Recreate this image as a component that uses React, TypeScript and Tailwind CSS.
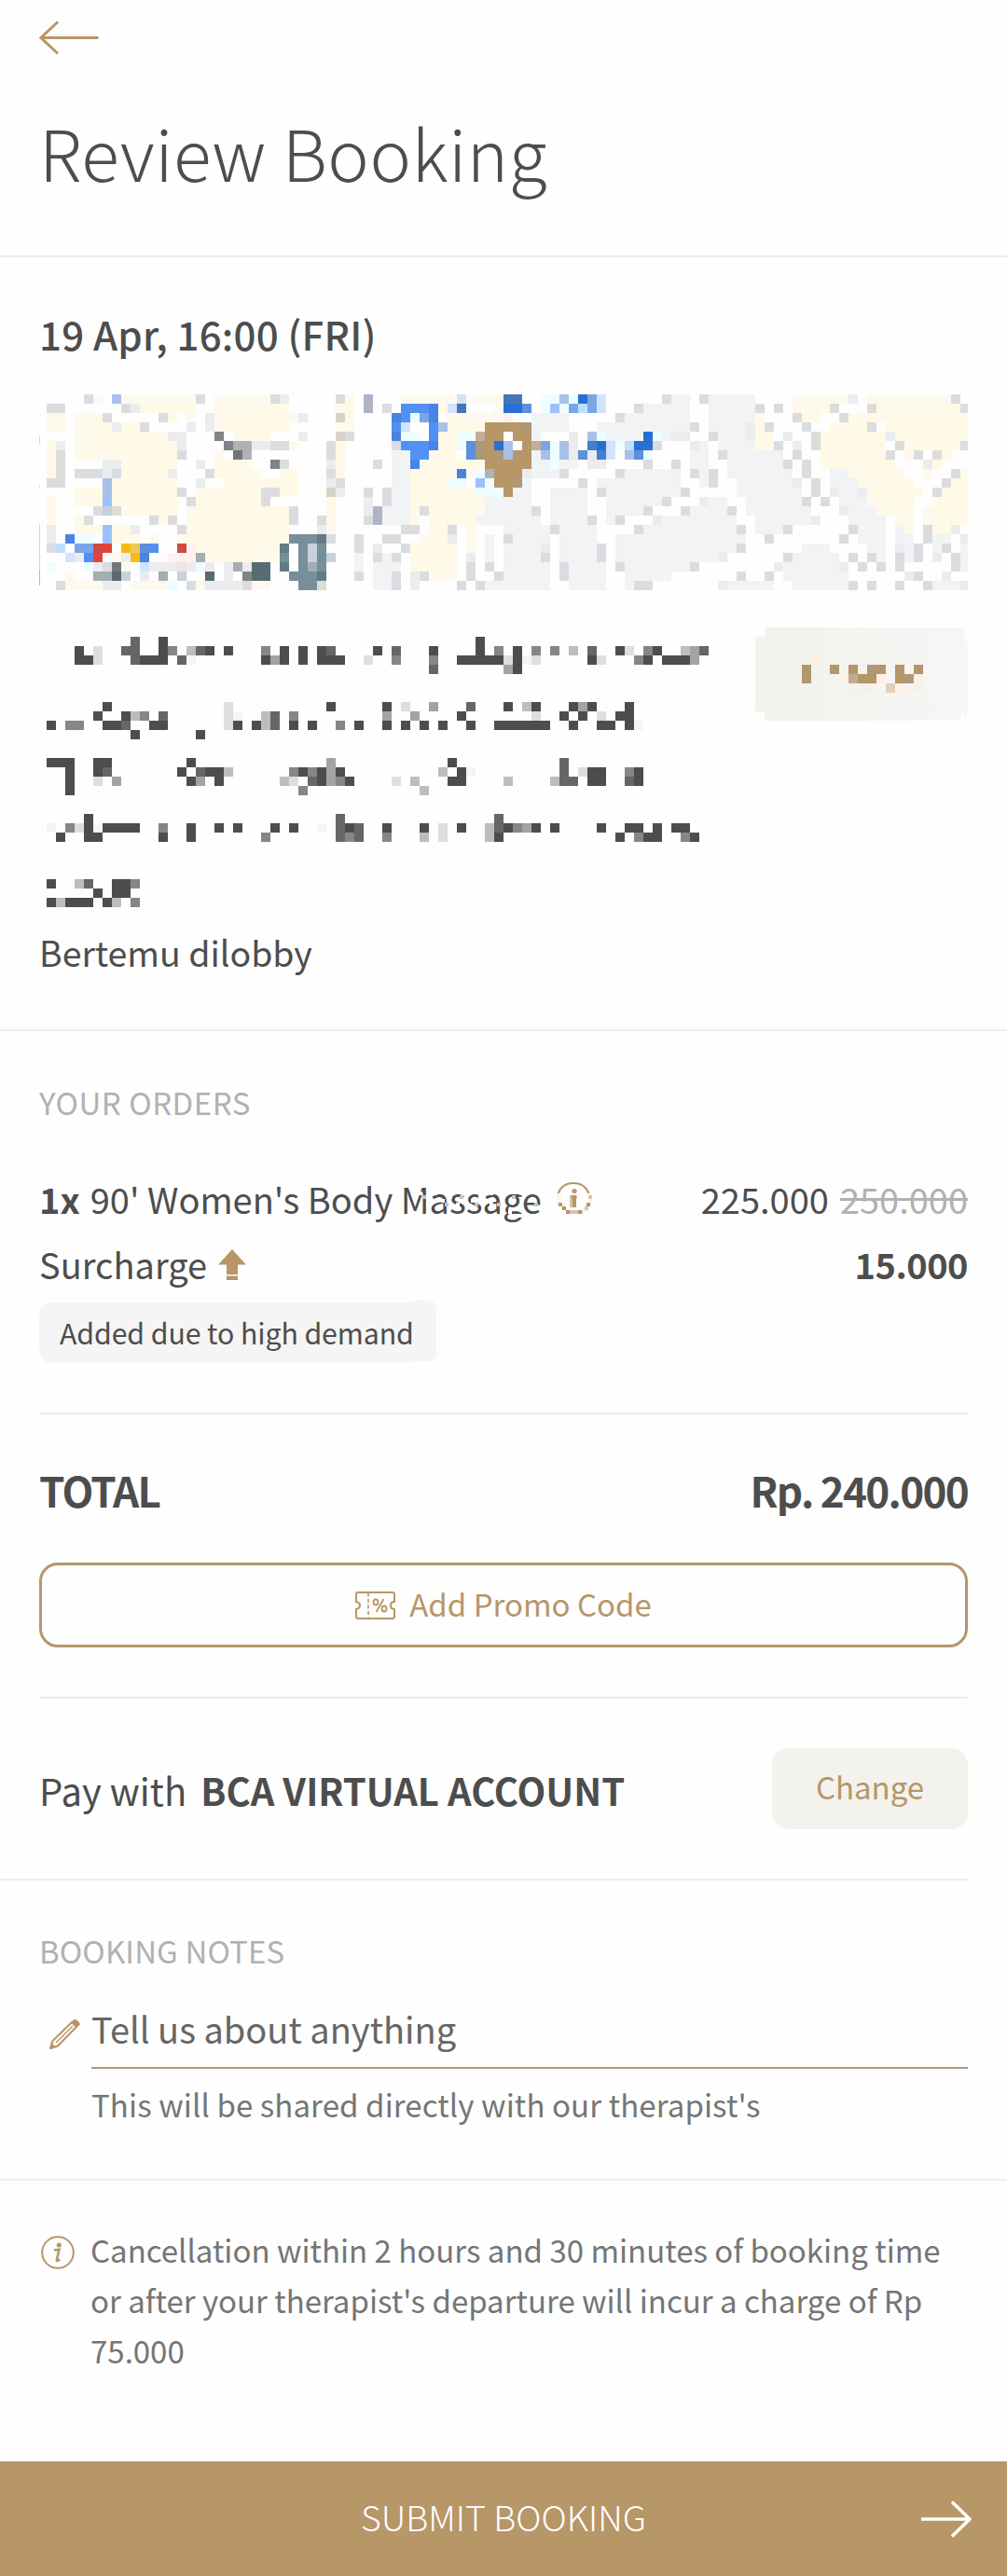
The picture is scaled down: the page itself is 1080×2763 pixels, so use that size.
import React from "react";

type Palette = Record<string, string>;

const MAP_PALETTE: Palette = {
  y: "#fff9e7",
  Y: "#fdf9ee",
  g: "#dbdce0",
  w: "#dcddd9",
  W: "#d6d4c9",
  h: "#ebecee",
  b: "#f1f3f5",
  k: "#818486",
  K: "#737679",
  m: "#afb2b5",
  t: "#768f9a",
  T: "#637b86",
  s: "#c6d2db",
  D: "#586b73",
  d: "#a3adb2",
  "1": "#4a84e2",
  "2": "#5191f6",
  "3": "#a9c0e9",
  "4": "#9cc0fb",
  "5": "#d3e3fb",
  "6": "#eefdff",
  c: "#bde0ff",
  r: "#e34439",
  R: "#cf4b42",
  o: "#f5bb14",
  O: "#eec75c",
  p: "#f4e2e2",
  P: "#fff2ee",
  n: "#b79668",
  N: "#ae9878",
  u: "#c3ad94",
  B: "#2770d3",
  C: "#4576b8",
  E: "#4080cf",
  e: "#5b90da",
  f: "#7ba6e6",
  v: "#b0b3c8",
};

// west / centre / east parts of the map preview, one char per 10px block
const MAP_TILES: string[][] = [
  [
    ".....gY.3YYYYYYYYg.YYYYYYwh.....wY",
    ".wg......ghyyyyyy..yyyyyyyy.....Yy",
    ".yy.Yyyg.....gy.Y.hyyyyyyyyYh...Wy",
    ".yY.Yyyyhyyg....h.hYyyyyyyy.....YY",
    "....YyyyyyyyyYhh...k.Yyyy...h...Wg",
    ".yh.Yyyyyyyyyyyh....kmmhhgwy...gy.",
    ".yw.YyyYyyyyyyyg...Y.Km........wy.",
    ".yw....hhyyyyyy..h.yyyy..kg....hy.",
    ".yw.ggghgyyyyyh...gyyyyy..yy...wy.",
    ".gg....3yyyyyyy..h..yyyyyyyy...hg.",
    "....yyy3yyyyyyyg.yyYyyyyggyy...Wh.",
    ".y..yyy4yyyyyyy.gyyyyyyyg......y..",
    ".y....gswYyyyyy.Yyyyyyyyyyyg...y..",
    ".y..yg......gyw.yyyyyyyyyyyg..wy..",
    ".h..Yyy4yyh....gyyyyyyyyyyy...hY..",
    ".h.166.4yyy.Y..YyyyyyyyyyyytttTg..",
    ".gc.ffRr.oOe2..RPyyyyyyyyyT.tst...",
    "...5h2r.Yho1..PPPdyyyyyyYyt.tsts..",
    ".6...6hgKY.5hhhph6h.hdhDD.T.tdt...",
    "...Y..ddDs.h.d.s..D.h.kDD..tttT...",
    "..gYYYYhh.YYYY6.gYhhhhgYY...ttw...",
  ],
  [
    ".v...YYYYYY5YYYYCC..6636Bf5......g",
    ".v.g.2221y5C...YBBe.646fcf5...gbbb",
    "....126f1.YyYYYYP..bbbb.....gbbbbb",
    "....25..23yyyynnnnNbbbb...bbbbbbbb",
    "....166.2yy66unn.nnb...h.36bbbbB6b",
    "....g2221yy6eNnB3.nuf63h.EB56cBBg.",
    "....bb22yyy.eNnN3nnb363hehE5.3e6..",
    "..g.bb1Yyyyyyynnnnnbb6bb.hh....g..",
    "....bbyyyyy1Y6mnnnhbbbg.....gbbbbb",
    "....bbyyyy66.46nnNb.....g.bbbbbbbb",
    ".g.gbbyyyyyyy666nbb..bbbb.gbbbbbbb",
    ".h.gbbyyyyyyyybbbbb..bbbb..bbbbbbg",
    ".hvbbbygyyyyyYbbbbbg.bbbb..bbbbg..",
    ".gvbbby.yyyyybbbbbbb.bbbbg.bg...hb",
    ".....gg.yyg.y...bbbbbgbbbb....gbbb",
    "g..gg..Yyyh.y.b.gbbbb.bbbb..bbbbbb",
    "w.h..gyyyyy.Y.b.bbbbh.bbbbg.bbbbbb",
    "b.gbg.yyyyy.h.b.bbbbg.bbbbg.bbbbbb",
    "b.bbb.yyyyy.g.g.bbbbb.gbbbb.gbbbbb",
    "g.bbg.hgYyY.g..gbbbbb.gbbbb..bbbbb",
    "..bbg.h....g.gbbbbbbb..bbbb..bgg..",
  ],
  [
    "bb.gbbbbb....YYYYYYh.YYYYYYYYYg.",
    "bb..bbbbbw.w.yyyyw...wyyyyyyyyyg",
    "bb..bbbbby...wyy..wyYyYyyyyyyyyy",
    "bbg.bbbbhyg...g..yyyyg.yyyyyyyyy",
    "hh..gbbbhyy.h..wyyyyyyyhyyyyyyyy",
    "..hb.bbbbyyg.h.wyyyyyyy.wyyyyyyg",
    "..bb.gbbbbbb.g..yyyyyyyg.yg.wy..",
    "g.bb..bbbbbbg.g.yyyyyyyy...hy...",
    "b.gbg.bbbbbbb.g..bbyyyyyy..y..wy",
    "b..bg..bbbbbbh.g.bbbyyyyyy...gyy",
    "bg.....bbbbbbb.g.hbbhyyyyyy.gyyy",
    "...hbb..bbbbbbg.g.bbbYyyyy..yyyy",
    ".gbbbbg.bbbbbbb...hbbbYyyy.Yyyyy",
    "bbbbbbb..bbbbbbh...bbbb.yy.Yyyyy",
    "bbbbbbbg.bbbg......gbbb.by.wyyh.",
    "bbbbbbbb..g.......g.bbb.bb.gbb.h",
    "bbbbbbbg......bbb....bb.hbg.bg.b",
    "bbbbbh......gbbbbb.g.gb.gbg.h.gb",
    "bbg........hbbbbbbh.g.g.g.....gb",
    ".......g..g.bbbbbbb......hg..h..",
    ".....hbbbbb..bbbbbbg.g..g..gbbbh",
  ],
];

const MAP_ROWS = MAP_TILES[0].map((row, i) => row + MAP_TILES[1][i] + MAP_TILES[2][i]);

const INK: Palette = {
  X: "#4d4d4d",
  a: "#666666",
  A: "#868686",
  m: "#a3a3a3",
  c: "#bdbdbd",
  l: "#dedede",
  f: "#f5f5f5",
};

// masked address: row number -> "column + run of shades"
const ADDRESS_ROWS: [number, string][] = [
  [0, "11a 14X 48X"],
  [1, "5X 7l 10aa 14XA 17caX 21X 25A 27X 29X 31Xa 37X 39a 43X 48X 50A 52X 54A 56A 58c 60a 63Xl 66AX 70cma"],
  [2, "5XXl 11aXXX 16af 25XmX 29X 31XXX 36l 39A 43A 46XXXXXlXfl 60Xl 65AX 68XXXm"],
  [3, "43a 51mX"],
  [7, "8X 21l 32X 38X 40l 43m 47a 51X 53cX 58XmX 64X"],
  [8, "7X 10XcA 14a 21lf 25ca 28A 38m 41m 46X 54l 57X 59X 61l 63XX"],
  [9, "2X 4AA 8XXa 13XX 21lX 24Xca 28X 30X 33A 35X 38X 40X 42X 44X 47X 50XXXXXX 58X 61XX 64Xf"],
  [10, "11X 18X"],
  [13, "2XXX 7XX 17X 32m 45X 57a"],
  [14, "4X 7Xa 16X 18aXXc 28AXAXmX 44c 46Xf 57a 59lXX 64AX"],
  [15, "4X 7l 9m 17Xm 20X 27cl 30aXmAX 39l 41c 45XX 51c 56caa 60XX 64aX"],
  [16, "4X 29A 42c"],
  [19, "6X 33a 50a"],
  [20, "2f 4AlXfXXXX 14A 17X 20X 22X 26X 28X 31f 33aXa 38X 42X 44l 46X 49caXAmX 56X 61X 64XX 67X 69XX"],
  [21, "3X 6XX 14X 17X 25A 33aAa 38A 42c 44l 49cX 63X 65AXX 70AX"],
  [26, "2X 5ca 9XXA"],
  [27, "7X 9XX"],
  [28, "2XcXXX 8Xc 11A"],
];

const GOLD: Palette = {
  n: "#b3966c",
  N: "#af987a",
  u: "#c0ac95",
  U: "#e2d1ba",
  P: "#fdf1e3",
  Q: "#ffeedc",
  f: "#f7f1eb",
};

const BUTTON_ROWS: [number, string][] = [
  [3, "9Q"],
  [4, "8n 11n 13nfNn 18n 20n"],
  [5, "8n 12PunnP 18nNP"],
  [6, "9f 13fff 17UP 20f"],
];

const Blocks = ({ rows, palette }: { rows: [number, string][]; palette: Palette }) => (
  <>
    {rows.map(([row, runs]) =>
      runs.split(" ").map((run) => {
        const start = parseInt(run, 10);
        const shades = run.replace(/\d+/, "");
        return [...shades].map((s, i) => (
          <rect
            key={`${row}-${start + i}`}
            x={(start + i) * 10}
            y={row * 10}
            width={10}
            height={10}
            fill={palette[s]}
          />
        ));
      })
    )}
  </>
);

const MapPreview = () => (
  <svg className="block h-[210px] w-[996px]" viewBox="2 0 996 210" shapeRendering="crispEdges">
    <path d="M2 44h1v10h-1zM2 97h1v3h-1zM2 139h1v47h-1z" fill="#d5d6da" />
    <path d="M2 187h1v18h-1z" fill="#b0bdc1" />
    {MAP_ROWS.map((row, y) =>
      [...row].map((cell, x) =>
        cell === "." ? null : (
          <rect key={`${x}-${y}`} x={x * 10} y={y * 10} width={10} height={10} fill={MAP_PALETTE[cell]} />
        )
      )
    )}
  </svg>
);

const MaskedAddress = () => (
  <svg className="block h-[290px] w-[720px]" viewBox="12 0 720 290" shapeRendering="crispEdges">
    <Blocks rows={ADDRESS_ROWS} palette={INK} />
  </svg>
);

const MaskedButton = () => (
  <svg className="block h-[100px] w-[228px]" viewBox="30 0 228 100">
    <defs>
      <linearGradient id="fade" x1="0" x2="1">
        <stop offset="0" stopColor="#f2f1eb" />
        <stop offset="0.5" stopColor="#f4f4f1" />
        <stop offset="1" stopColor="#f7f6f6" />
      </linearGradient>
    </defs>
    <path d="M30 10h10V0h214v11q4 4 4 10v66q0 6-4 10v-7h-4v10H40V90H30z" fill="url(#fade)" />
    <g shapeRendering="crispEdges">
      <Blocks rows={BUTTON_ROWS} palette={GOLD} />
    </g>
  </svg>
);

const InfoIcon = () => (
  <svg className="h-9 w-9" viewBox="0 0 36 36" fill="none">
    <circle cx="18" cy="18" r="16.8" stroke="#b79668" strokeWidth="2" />
    <circle cx="19.3" cy="10" r="2.6" fill="#b79668" />
    <path d="M14 15.5l5.5-.8-2.6 11q-.3 1.6 1 1.2l2.4-1.4" stroke="#b79668" strokeWidth="2.6" />
  </svg>
);

// same info badge, lower half broken into blocks
const MaskedInfoIcon = () => (
  <svg className="h-9 w-10" viewBox="0 0 40 36" fill="none">
    <path d="M1.500 12Q6 1 18 1t16.500 11" stroke="#b79668" strokeWidth="2" />
    <circle cx="19" cy="9.500" r="2.600" fill="#b79668" />
    <g shapeRendering="crispEdges">
      <path d="M0 12h5v10h4v6h4v4H9v-2H5v-4H0zM34 12h4v12h-4v8h-6v-4h3v-6h3z" fill="#fdf5e8" />
      <path d="M14 14h8v4h-8z" fill="#d8c5a8" />
      <path d="M16 14h5v13h-5z" fill="#b79668" />
      <path d="M14 18h3v9h-3zM10 30h18v4H10zM34 14h4v4h-4zM30 26h4v4h-4z" fill="#d8c5a8" />
      <path d="M2 22h4v4H2zM6 26h4v4H6zM10 30h4v4h-4zM23 30h4v4h-4zM32 22h4v4h-4z" fill="#b3966c" />
    </g>
  </svg>
);

const TicketIcon = () => (
  <svg className="h-[30px] w-[43px]" viewBox="0 0 43 30" fill="none" stroke="#b79668" strokeWidth="2">
    <path d="M3 1h37q2 0 2 2v8q-4 0-4 4t4 4v8q0 2-2 2H3q-2 0-2-2v-8q4-1 4-4t-4-4V3q0-2 2-2z" />
    <path d="M14 1.500v27" strokeDasharray="4 2.500" strokeWidth="1.600" />
    <ellipse cx="22" cy="11.500" rx="2.500" ry="3" strokeWidth="1.800" />
    <ellipse cx="31" cy="18.500" rx="2.500" ry="3" strokeWidth="1.800" />
    <path d="M30.500 8l-8 14" strokeWidth="1.800" />
  </svg>
);

const PencilIcon = () => (
  <svg className="h-[34px] w-[34px]" viewBox="0 0 34 34" fill="none" stroke="#b79668" strokeWidth="2">
    <path d="M2 32l2.500-8L25 4l5 5L10 29.500z" strokeLinejoin="round" />
    <path d="M8 26L26 8" strokeWidth="1.400" />
    <path d="M25 4l2-2.500q2-1 4.500 1.500t1.500 4l-3 2z" fill="#b79668" strokeWidth="1" />
    <path d="M1 33l2-7 5 5z" fill="#b79668" stroke="none" />
  </svg>
);

export default function App() {
  return (
    <div className="min-h-[2763px] w-[1080px] bg-[#fefefe] font-['Noto_Sans_CJK_SC','Noto_Sans',sans-serif] text-[#4d4d4d]">
      <header className="h-[276px] border-b-2 border-[#ececec] px-[42px] pt-[22px]">
        <svg className="block h-[37px] w-[64px]" viewBox="0 0 64 37" fill="none" stroke="#b79668" strokeWidth="3">
          <path d="M63.500 18.500H2M20 1.500L2 18.500l18 17" />
        </svg>
        <h1 className="mt-14 text-[75px] font-light leading-[96px] tracking-[0.5px]">Review Booking</h1>
      </header>

      <section className="h-[830px] border-b-2 border-[#ececec] px-[42px] pt-[52px]">
        <p className="text-[42px] font-medium leading-[60px] tracking-[0.2px]">19 Apr, 16:00 (FRI)</p>
        <div className="mt-[35px]">
          <MapPreview />
        </div>
        <div className="mt-10 flex items-start justify-between">
          <div className="pt-2.5">
            <MaskedAddress />
          </div>
          <MaskedButton />
        </div>
        <p className="mt-[18px] text-[37.5px] leading-[60px]">Bertemu dilobby</p>
      </section>

      <section className="px-[42px] pt-[52px]">
        <h2 className="text-[33px] leading-[48px] tracking-[0.5px] text-[#b1b1b1]">YOUR ORDERS</h2>
        <div className="mt-[50px] flex h-[60px] items-center text-[38px] leading-[60px]">
          <span className="font-bold">1x</span>
          <span className="relative ml-[11px]">
            90' Women's Body Massage
            <svg
              className="absolute right-0 bottom-[6px] h-8 w-[136px]"
              viewBox="0 0 136 32"
              shapeRendering="crispEdges"
            >
              <path
                d="M4 0h4v4H4zM16 0h8v4h-8zM36 4h4v4h-4zM28 8h4v4h-4zM44 12h4v4h-4zM52 0h4v4h-4zM60 8h4v4h-4zM68 4h4v4h-4zM76 0h8v4h-8zM80 12h4v4h-4zM92 8h4v4h-4zM100 20h4v4h-4zM112 0h4v4h-4zM124 8h4v4h-4zM108 24h8v4h-8z"
                fill="#fefefe"
              />
              <path
                d="M8 4h4v4H8zM32 12h4v4h-4zM48 4h4v4h-4zM64 12h4v4h-4zM88 12h4v4h-4zM104 4h4v4h-4zM128 12h4v4h-4z"
                fill="#c4c4c4"
              />
            </svg>
          </span>
          <div className="ml-4">
            <MaskedInfoIcon />
          </div>
          <span className="ml-auto">225.000</span>
          <span className="ml-3 text-[#b1b1b1] line-through">250.000</span>
        </div>
        <div className="mt-2.5 flex h-[60px] items-center text-[38px] leading-[60px]">
          <span>Surcharge</span>
          <svg className="ml-3 h-[33px] w-[30px]" viewBox="0 0 30 33" fill="#b79668">
            <path d="M15 0l15 16.500h-9V27H9V16.500H0zM9 28.500h12V33H9z" />
          </svg>
          <span className="ml-auto font-bold tracking-[-0.5px]">15.000</span>
        </div>
        <div className="mt-[11px] flex">
          <span className="z-10 h-[65px] w-[398px] rounded-l-[14px] bg-[#f5f5f5] pl-[22px] text-[30.3px] leading-[65px] whitespace-nowrap tracking-[-0.1px]">
            Added due to high demand
          </span>
          <span className="-mt-0.5 mb-0.5 h-[65px] w-7 rounded-r-lg bg-[#f5f5f5]" />
        </div>
        <hr className="mt-[53px] border-t-2 border-[#ececec]" />

        <div className="mt-[51px] flex justify-between text-[44px] font-bold leading-[60px] tracking-[-1.7px]">
          <span>TOTAL</span>
          <span>Rp. 240.000</span>
        </div>
        <button className="mt-12 flex h-[91px] w-full items-center justify-center gap-[15px] rounded-[20px] border-3 border-[#b79668] text-[33px] text-[#b79668]">
          <TicketIcon />
          <span className="-mt-0.5">Add Promo Code</span>
        </button>
        <hr className="mt-[53px] border-t-2 border-[#ececec]" />

        <div className="mt-[53px] flex h-[87px] items-center text-[40px]">
          <span className="pt-0.5">Pay with</span>
          <span className="ml-[15px] pt-0.5 font-bold">BCA VIRTUAL ACCOUNT</span>
          <button className="ml-auto h-[87px] w-[210px] rounded-[18px] bg-[#f3f2ed] pb-1 text-[33px] text-[#b79668]">
            Change
          </button>
        </div>
      </section>
      <hr className="mt-[53px] mr-[42px] border-t-2 border-[#ececec]" />

      <section className="h-[322px] border-b-2 border-[#ececec] px-[42px] pt-[51px]">
        <h2 className="text-[33px] leading-[48px] tracking-[0.1px] text-[#b1b1b1]">BOOKING NOTES</h2>
        <div className="mt-[29px] flex">
          <div className="w-14 shrink-0 pt-5 pl-2.5">
            <PencilIcon />
          </div>
          <div className="flex-1">
            <p className="h-[74px] border-b-2 border-[#ae9878] pt-px text-[38px] leading-[60px] text-[#666666]">
              Tell us about anything
            </p>
            <p className="mt-[11px] text-[33px] leading-[54px] tracking-[0.1px] text-[#757575]">
              This will be shared directly with our therapist's
            </p>
          </div>
        </div>
      </section>

      <section className="flex h-[301px] px-[42px] pt-[47px]">
        <div className="w-[55px] shrink-0 pt-3 pl-0.5">
          <InfoIcon />
        </div>
        <p className="text-[33px] leading-[54px] whitespace-nowrap text-[#757575]">
          Cancellation within 2 hours and 30 minutes of booking time
          <br />
          or after your therapist's departure will incur a charge of Rp
          <br />
          75.000
        </p>
      </section>

      <button className="relative flex h-[123px] w-full items-center justify-center bg-[#b79668] text-[37.5px] font-light text-white">
        <span className="-mt-1">SUBMIT BOOKING</span>
        <svg
          className="absolute right-[38px] h-10 w-[54px]"
          viewBox="0 0 54 40"
          fill="none"
          stroke="#fff"
          strokeWidth="3.5"
        >
          <path d="M0 20h52M33 1.500L52 20 33 38.500" />
        </svg>
      </button>
    </div>
  );
}
